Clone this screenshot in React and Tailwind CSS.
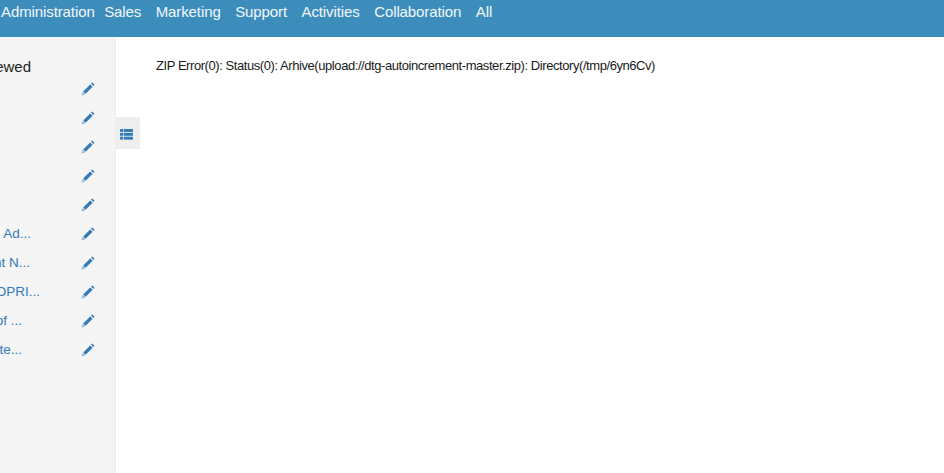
import React from "react";

const Pencil = () => (
  <svg viewBox="0 0 14 14" className="w-[14px] h-[14px] shrink-0 fill-[#337ab7]">
    <path d="M0.5 13.5 L1.6 10 L2.6 10.4 L3.6 11.4 L4 12.4 Z" fill="#8fb3d6" />
    <path d="M2.2 9.4 L9.2 2.4 L11.6 4.8 L4.6 11.8 Z" />
    <path d="M10 1.6 L11.2 0.5 L13.5 2.8 L12.4 4 Z" />
  </svg>
);

const nav = ["Administration", "Sales", "Marketing", "Support", "Activities", "Collaboration", "All"];
const rows = [
  { t: "Accounts", w: "w-0" },
  { t: "Contacts", w: "w-0" },
  { t: "Leads", w: "w-0" },
  { t: "Tasks", w: "w-0" },
  { t: "Notes", w: "w-0" },
  { t: "Module Ad...", w: "w-[31px]" },
  { t: "Document N...", w: "w-[30px]" },
  { t: "PROPRI...", w: "w-[40px]" },
  { t: "List of ...", w: "w-[22px]" },
  { t: "Template...", w: "w-[22px]" },
];

export default function App() {
  return (
    <div className="w-[944px] h-[473px] overflow-hidden bg-white font-['Liberation_Sans',Arial,sans-serif]">
      <header className="h-[37px] bg-[#3d8dbc] flex items-start pl-[1px] pt-[3px] gap-[14.5px] text-[15px] leading-[18px] tracking-[-0.1px] text-[#f2f7fa] whitespace-nowrap">
        {nav.map((n, i) => (
          <span key={n} className={i === 0 ? "-mr-[5px]" : ""}>{n}</span>
        ))}
      </header>
      <div className="flex h-[436px]">
        <aside className="w-[116px] shrink-0 bg-[#f5f5f5] border-r border-[#ececec] overflow-hidden">
          <div className="h-[37px] pt-[23px] text-[15px] leading-[14px] text-[#222]">
            <span className="w-[31px] overflow-hidden flex justify-end whitespace-nowrap">
              <span className="shrink-0">Last Viewed</span>
            </span>
          </div>
          {rows.map((r) => (
            <div key={r.t} className="h-[29px] flex items-center">
              <span className="w-[81px] shrink-0 pt-[2px]">
                <span className={`${r.w} overflow-hidden flex justify-end whitespace-nowrap text-[13.5px] text-[#337ab7]`}>
                  <span className="shrink-0">{r.t}</span>
                </span>
              </span>
              <Pencil />
            </div>
          ))}
        </aside>
        <div className="flex-1 flex items-start">
          <div className="mt-[80px] w-[24px] h-[32px] bg-[#eeeeee] flex items-center justify-center pr-[4px] pt-[2px] shrink-0">
            <svg viewBox="0 0 14 12" className="w-[13px] h-[11px] fill-[#337ab7]">
              <rect x="0" y="0" width="3.2" height="3.2" />
              <rect x="4" y="0" width="10" height="3.2" />
              <rect x="0" y="4.2" width="3.2" height="3.2" />
              <rect x="4" y="4.2" width="10" height="3.2" />
              <rect x="0" y="8.4" width="3.2" height="3.2" />
              <rect x="4" y="8.4" width="10" height="3.2" />
            </svg>
          </div>
          <p className="ml-[16px] mt-[21px] text-[13px] leading-[16px] tracking-[-0.43px] text-[#1a1a1a] whitespace-nowrap">
            ZIP Error(0): Status(0): Arhive(upload://dtg-autoincrement-master.zip): Directory(/tmp/6yn6Cv)
          </p>
        </div>
      </div>
    </div>
  );
}
